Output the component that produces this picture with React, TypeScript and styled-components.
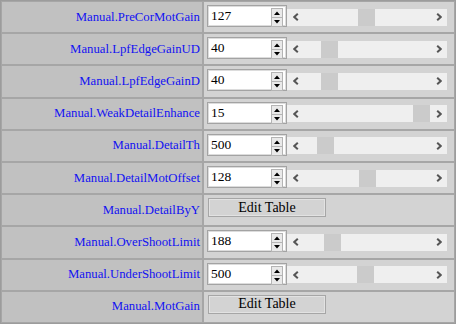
import React from "react";
import styled, { createGlobalStyle } from "styled-components";

const Global = createGlobalStyle`
  html, body { margin: 0; padding: 0; background: #d3d3d3; }
  body { font-family: "Liberation Serif", "Times New Roman", serif; }
`;

const Table = styled.div`
  display: grid;
  grid-template-columns: 202px 252px;
  grid-template-rows: repeat(10, 1fr);
  width: 456px;
  height: 324px;
  box-sizing: border-box;
  border: 1px solid #9c9c9c;
  font-family: "Liberation Serif", "Times New Roman", serif;
`;

const LabelCell = styled.div`
  background: #c1c1c1;
  border: 1px solid #a6a6a6;
  display: flex;
  align-items: center;
  justify-content: flex-end;
  padding-right: 2px;
  color: #1212f2;
  font-family: "Liberation Serif", serif;
  font-size: 12.75px;
  white-space: nowrap;
  overflow: hidden;
`;

const ValueCell = styled.div`
  background: #d3d3d3;
  border: 1px solid #a6a6a6;
  display: flex;
  align-items: center;
  padding-left: 3px;
  padding-bottom: 2px;
`;

const NumBox = styled.div`
  position: relative;
  width: 80px;
  height: 22px;
  box-sizing: border-box;
  border: 1px solid #a3a3a3;
  box-shadow: inset 0 0 0 1px #dcdcdc;
  background: #fff;
  display: flex;
  align-items: center;
  padding-left: 3px;
  font-family: "Liberation Serif", serif;
  font-size: 13.5px;
  color: #000;
`;

const Spin = styled.div`
  position: absolute;
  right: 3px;
  top: 2px;
  width: 12px;
  display: flex;
  flex-direction: column;
`;

const SpinBtn = styled.div`
  height: 8px;
  box-sizing: content-box;
  border: 1px solid #b4b4b4;
  background: #e9e9e9;
  display: flex;
  align-items: center;
  justify-content: center;
  & + & { border-top: none; }
`;

const Scroll = styled.div`
  position: relative;
  width: 160px;
  height: 17px;
  background: #efefef;
  margin-top: 2px;
`;

const Arrow = styled.div<{ $side: "l" | "r" }>`
  position: absolute;
  top: 0;
  ${(p) => (p.$side === "l" ? "left: 6px;" : "right: 5px;")}
  width: 12px;
  height: 17px;
  display: flex;
  align-items: center;
  justify-content: ${(p) => (p.$side === "l" ? "flex-start" : "flex-end")};
`;

const Thumb = styled.div`
  position: absolute;
  top: 0;
  width: 17px;
  height: 17px;
  background: #cbcbcb;
`;

const EditBtn = styled.div`
  width: 118px;
  height: 19px;
  box-sizing: border-box;
  border: 1px solid #a6a6a6;
  box-shadow: inset 0 0 0 1px #e2e2e2;
  background: #d3d3d3;
  margin-left: 1px;
  margin-bottom: 3px;
  display: flex;
  align-items: center;
  justify-content: center;
  font-family: "Liberation Serif", serif;
  font-size: 14px;
  color: #000;
`;

const TriUp = () => (
  <svg width="6" height="4" viewBox="0 0 6 4"><path d="M0 4 L3 0.5 L6 4 Z" fill="#000" /></svg>
);
const TriDown = () => (
  <svg width="6" height="4" viewBox="0 0 6 4"><path d="M0 0 L3 3.5 L6 0 Z" fill="#000" /></svg>
);
const ChevL = () => (
  <svg width="6" height="8" viewBox="0 0 6 8"><path d="M4.8 0.8 L1.3 4 L4.8 7.2" stroke="#555" strokeWidth="2" fill="none" /></svg>
);
const ChevR = () => (
  <svg width="6" height="8" viewBox="0 0 6 8"><path d="M1.2 0.8 L4.7 4 L1.2 7.2" stroke="#555" strokeWidth="2" fill="none" /></svg>
);

type Row =
  | { label: string; kind: "num"; value: number; max: number }
  | { label: string; kind: "table" };

const rows: Row[] = [
  { label: "Manual.PreCorMotGain", kind: "num", value: 127, max: 255 },
  { label: "Manual.LpfEdgeGainUD", kind: "num", value: 40, max: 255 },
  { label: "Manual.LpfEdgeGainD", kind: "num", value: 40, max: 255 },
  { label: "Manual.WeakDetailEnhance", kind: "num", value: 15, max: 15 },
  { label: "Manual.DetailTh", kind: "num", value: 500, max: 4095 },
  { label: "Manual.DetailMotOffset", kind: "num", value: 128, max: 255 },
  { label: "Manual.DetailByY", kind: "table" },
  { label: "Manual.OverShootLimit", kind: "num", value: 188, max: 1023 },
  { label: "Manual.UnderShootLimit", kind: "num", value: 500, max: 1023 },
  { label: "Manual.MotGain", kind: "table" },
];

export default function App() {
  return (
    <>
      <Global />
      <Table>
        {rows.map((r) => (
          <React.Fragment key={r.label}>
            <LabelCell>{r.label}</LabelCell>
            <ValueCell>
              {r.kind === "num" ? (
                <>
                  <NumBox>
                    {r.value}
                    <Spin>
                      <SpinBtn><TriUp /></SpinBtn>
                      <SpinBtn><TriDown /></SpinBtn>
                    </Spin>
                  </NumBox>
                  <Scroll>
                    <Arrow $side="l"><ChevL /></Arrow>
                    <Thumb style={{ left: 17 + Math.round((r.value / r.max) * 109) }} />
                    <Arrow $side="r"><ChevR /></Arrow>
                  </Scroll>
                </>
              ) : (
                <EditBtn>Edit Table</EditBtn>
              )}
            </ValueCell>
          </React.Fragment>
        ))}
      </Table>
    </>
  );
}
